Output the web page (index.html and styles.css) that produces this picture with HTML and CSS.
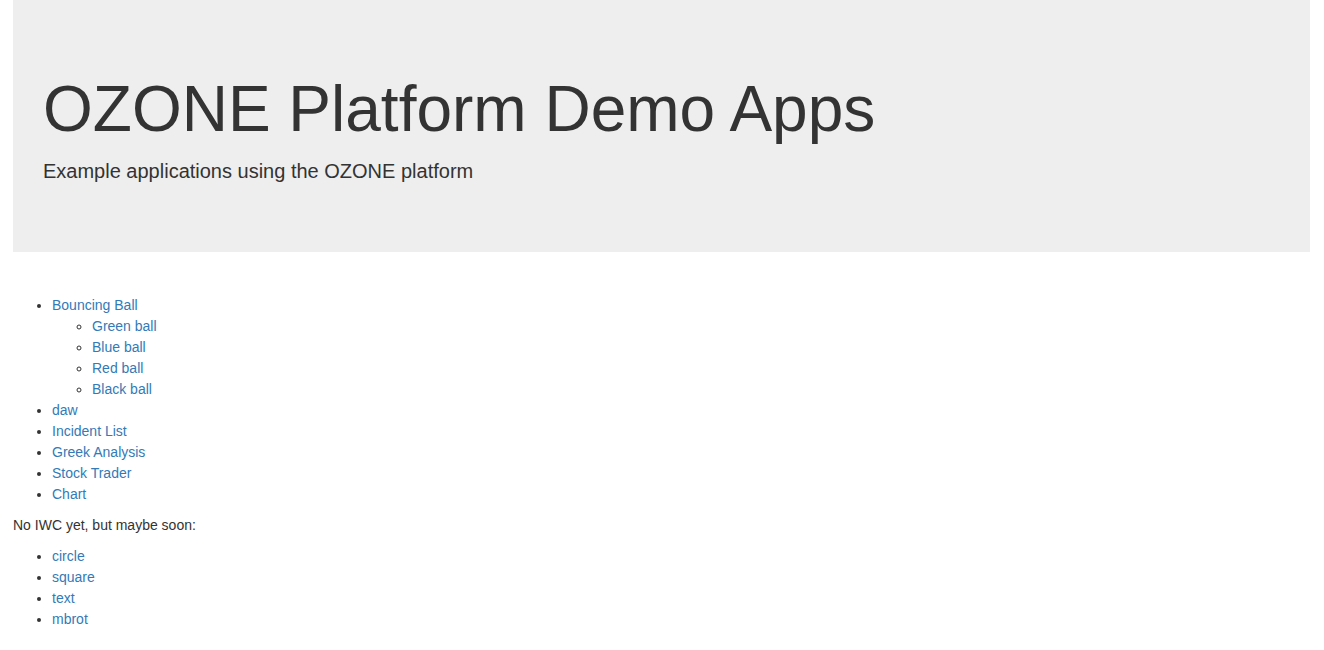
FILE: index.html
```html
<!DOCTYPE html>
<html>
<head>
<meta charset="utf-8">
<title>OZONE Platform Demo Apps</title>
<link rel="stylesheet" href="styles.css">
</head>
<body>
<div class="page">
  <div class="jumbotron">
    <h1 class="title">OZONE Platform Demo Apps</h1>
    <p class="lead">Example applications using the OZONE platform</p>
  </div>
  <ul class="apps first">
    <li><a href="#">Bouncing Ball</a>
      <ul class="sub">
        <li><a href="#">Green ball</a></li>
        <li><a href="#">Blue ball</a></li>
        <li><a href="#">Red ball</a></li>
        <li><a href="#">Black ball</a></li>
      </ul>
    </li>
    <li><a href="#">daw</a></li>
    <li><a href="#">Incident List</a></li>
    <li><a href="#">Greek Analysis</a></li>
    <li><a href="#">Stock Trader</a></li>
    <li><a href="#">Chart</a></li>
  </ul>
  <p class="note">No IWC yet, but maybe soon:</p>
  <ul class="apps">
    <li><a href="#">circle</a></li>
    <li><a href="#">square</a></li>
    <li><a href="#">text</a></li>
    <li><a href="#">mbrot</a></li>
  </ul>
</div>
</body>
</html>
```
FILE: styles.css
```css
html, body {
  margin: 0;
  padding: 0;
  background: #fff;
}
body {
  font-family: "Liberation Sans", Arial, Helvetica, sans-serif;
  font-size: 14px;
  line-height: 21px;
  color: #333;
}
.page {
  padding: 0 14px 0 13px;
}
.jumbotron {
  background: #eeeeee;
  padding: 52px 30px 51px 30px;
  margin-bottom: 43px;
}
.title {
  margin: 23px 0 12px 0;
  font-size: 64px;
  line-height: 69px;
  font-weight: 500;
  color: #333;
}
.lead {
  margin: 0 0 15px 0;
  font-size: 20px;
  line-height: 30px;
  font-weight: 300;
  color: #333;
}
.apps {
  margin: 0 0 10px 0;
  padding-left: 39px;
}
.apps .sub {
  margin: 0;
  padding-left: 40px;
  list-style-type: circle;
}
.note {
  margin: 0 0 10px 0;
}
a {
  color: #337ab7;
  text-decoration: none;
}
```
